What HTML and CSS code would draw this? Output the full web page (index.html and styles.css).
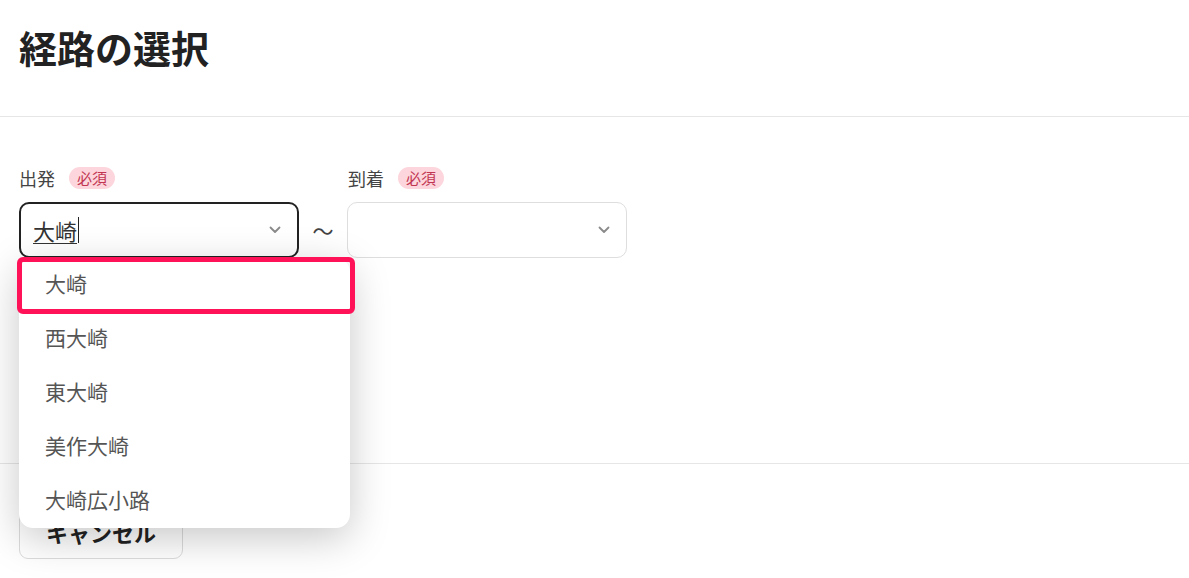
FILE: index.html
```html
<!DOCTYPE html>
<html lang="ja">
<head>
<meta charset="utf-8">
<title>経路の選択</title>
<link rel="stylesheet" href="styles.css">
</head>
<body>
<div class="page">
  <header class="header">
    <h1 class="title">経路の選択</h1>
  </header>
  <section class="body">
    <div class="route">
      <div class="field">
        <div class="label-row"><span class="label">出発</span><span class="badge">必須</span></div>
        <div class="select-wrap">
          <div class="select focused">
            <span class="value">大崎</span><span class="caret"></span>
            <svg class="chev" width="12" height="8" viewBox="0 0 12 8"><polyline points="1.5,1.5 6,6 10.5,1.5" fill="none" stroke="#8a8a8a" stroke-width="1.8" stroke-linecap="round" stroke-linejoin="round"/></svg>
          </div>
          <ul class="menu">
            <li class="opt">大崎</li>
            <li class="opt">西大崎</li>
            <li class="opt">東大崎</li>
            <li class="opt">美作大崎</li>
            <li class="opt">大崎広小路</li>
          </ul>
          <div class="highlight"></div>
        </div>
      </div>
      <div class="tilde">〜</div>
      <div class="field">
        <div class="label-row"><span class="label">到着</span><span class="badge">必須</span></div>
        <div class="select">
          <span class="value"></span>
          <svg class="chev" width="12" height="8" viewBox="0 0 12 8"><polyline points="1.5,1.5 6,6 10.5,1.5" fill="none" stroke="#8a8a8a" stroke-width="1.8" stroke-linecap="round" stroke-linejoin="round"/></svg>
        </div>
      </div>
    </div>
  </section>
  <footer class="footer">
    <button class="btn" type="button">キャンセル</button>
  </footer>
</div>
</body>
</html>
```
FILE: styles.css
```css
* { box-sizing: border-box; }
html, body { margin: 0; padding: 0; background: #fff; }
body {
  font-family: "Noto Sans CJK JP", "Noto Sans", sans-serif;
  color: #222;
  width: 1189px;
  height: 578px;
  overflow: hidden;
}
.header {
  height: 117px;
  padding: 21px 19px 0;
  border-bottom: 1px solid #e6e6e6;
}
.title {
  margin: 0;
  font-size: 38px;
  line-height: 52px;
  font-weight: 700;
  color: #222;
}
.body {
  height: 347px;
  padding: 49px 19px 0;
  border-bottom: 1px solid #e6e6e6;
}
.route {
  display: grid;
  grid-template-columns: 280px 48px 280px;
  align-items: end;
}
.field { display: flex; flex-direction: column; }
.label-row {
  display: flex;
  align-items: center;
  gap: 14px;
  height: 24px;
  margin-bottom: 12px;
}
.label-row .label { font-size: 18px; color: #444; line-height: 24px; }
.field:last-child .label-row { padding-left: 1px; }
.badge {
  font-size: 15px;
  line-height: 22px;
  height: 22px;
  padding: 0 8px;
  border-radius: 11px;
  background: #fcd6dc;
  color: #c23552;
}
.select-wrap { position: relative; }
.select {
  height: 56px;
  border: 1px solid #dedede;
  border-radius: 10px;
  display: flex;
  align-items: center;
  padding: 0 14px;
  background: #fff;
}
.select.focused { border: 2px solid #222; padding-left: 12px; }
.value {
  font-size: 22px;
  color: #333;
  line-height: 30px;
  text-decoration: underline;
  text-decoration-style: solid;
  text-decoration-thickness: 1px;
  text-underline-offset: 3px;
}
.caret {
  width: 1px;
  height: 26px;
  background: #222;
  margin-left: 1px;
}
.chev { margin-left: auto; margin-right: 2px; }
.tilde {
  height: 56px;
  display: flex;
  align-items: center;
  justify-content: center;
  font-size: 21px;
  color: #444;
}
.menu {
  position: absolute;
  left: 0;
  top: 56px;
  width: 331px;
  margin: 0;
  padding: 0;
  list-style: none;
  background: #fff;
  border-radius: 14px;
  box-shadow: 0 10px 40px rgba(0,0,0,0.22);
  z-index: 2;
}
.opt {
  height: 54px;
  display: flex;
  align-items: center;
  padding-left: 26px;
  padding-bottom: 5px;
  font-size: 21px;
  color: #555;
}
.highlight {
  position: absolute;
  left: -2px;
  top: 55px;
  width: 338px;
  height: 57px;
  border: 5px solid #ff1258;
  border-radius: 6px;
  z-index: 3;
}
.footer { padding: 41px 19px 0; }
.btn {
  width: 164px;
  height: 54px;
  border: 1px solid #dcdcdc;
  border-radius: 9px;
  background: #fff;
  font-family: inherit;
  font-size: 22px;
  font-weight: 700;
  color: #222;
  padding: 0;
}
```
